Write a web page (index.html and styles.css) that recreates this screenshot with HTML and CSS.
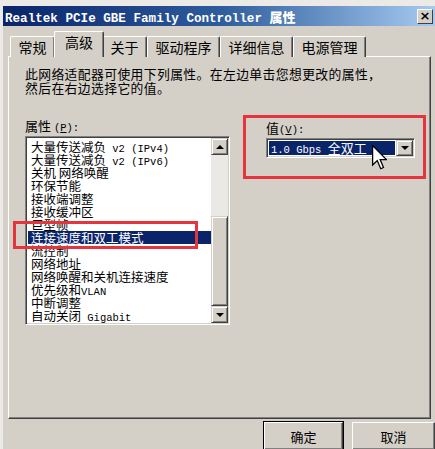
FILE: index.html
```html
<!DOCTYPE html>
<html lang="zh-CN">
<head>
    <meta charset="utf-8">
    <title>Realtek PCIe GBE Family Controller 属性</title>
    <link rel="stylesheet" href="styles.css">
</head>
<body>
    <div class="window">
        <div class="titlebar">
            <span class="title">Realtek PCIe GBE Family Controller <b class="cjk">属性</b></span>
            <span class="close">&times;</span>
        </div>
        <div class="tabs">
            <div class="tab">常规</div>
            <div class="tab active">高级</div>
            <div class="tab">关于</div>
            <div class="tab">驱动程序</div>
            <div class="tab">详细信息</div>
            <div class="tab">电源管理</div>
        </div>
        <div class="panel">
            <p class="desc">此网络适配器可使用下列属性。在左边单击您想更改的属性，<br>然后在右边选择它的值。</p>
            <div class="props">
                <div class="col">
                    <div class="label">属性 <span class="en">(<u>P</u>):</span></div>
                    <div class="listbox">
                        <ul class="items">
                            <li>大量传送减负<span class="en"> v2 (IPv4)</span></li>
                            <li>大量传送减负<span class="en"> v2 (IPv6)</span></li>
                            <li>关机 网络唤醒</li>
                            <li>环保节能</li>
                            <li>接收端调整</li>
                            <li>接收缓冲区</li>
                            <li>巨型帧</li>
                            <li class="selected">连接速度和双工模式</li>
                            <li>流控制</li>
                            <li>网络地址</li>
                            <li>网络唤醒和关机连接速度</li>
                            <li>优先级和<span class="en">VLAN</span></li>
                            <li>中断调整</li>
                            <li>自动关闭<span class="en"> Gigabit</span></li>
                        </ul>
                        <div class="scrollbar">
                            <div class="sb-btn"><span class="arrow up"></span></div>
                            <div class="sb-track"><div class="sb-thumb"></div></div>
                            <div class="sb-btn"><span class="arrow down"></span></div>
                        </div>
                    </div>
                </div>
                <div class="col">
                    <div class="label">值<span class="en">(<u>V</u>):</span></div>
                    <div class="combo">
                        <span class="combo-value"><span class="en">1.0 Gbps </span>全双工</span>
                        <span class="combo-btn"><span class="arrow down"></span></span>
                    </div>
                </div>
            </div>

            <!-- red annotation boxes and mouse pointer on top of the dialog -->
            <div class="mark mark-list"></div>
            <div class="mark mark-value"></div>
            <svg class="cursor" viewBox="0 0 12 20" width="15" height="25">
                <path d="M0.5 0.5 L0.5 16 L4.2 12.4 L7 19 L9.2 18 L6.5 11.6 L11.5 11.6 Z" fill="#fff" stroke="#000" stroke-width="1"/>
            </svg>
        </div>
        <div class="buttons">
            <button class="btn default">确定</button>
            <button class="btn cancel">取消</button>
        </div>
    </div>
</body>
</html>
```
FILE: styles.css
```css
body {
    margin: 0;
    background: #eceae6;
    font-family: "Noto Sans CJK SC", "DejaVu Sans", sans-serif;
    font-size: 13px;
    color: #000;
    overflow: hidden;
}
.window {
    width: 432px;
    height: 443px;
    margin: 6px 0 0 3px;
    background: #d4d0c8;
}
.en {
    font-family: "Liberation Mono", monospace;
    font-size: 10.5px;
}
.titlebar {
    height: 20px;
    display: flex;
    align-items: center;
    justify-content: space-between;
    padding: 0 2px 0 2px;
    background: linear-gradient(to right, #0a246a, #2d5c9c 50%, #a6caf0);
    color: #fff;
}
.title {
    font-family: "Liberation Mono", monospace;
    font-weight: bold;
    font-size: 12.6px;
    white-space: nowrap;
}
.title .cjk {
    font-family: "Noto Sans CJK SC", sans-serif;
    font-size: 13px;
}
.close {
    width: 14px;
    height: 13px;
    background: #d4d0c8;
    border: 1px solid;
    border-color: #fff #404040 #404040 #fff;
    color: #000;
    font-family: "DejaVu Sans", sans-serif;
    font-weight: bold;
    font-size: 13px;
    line-height: 12px;
    text-align: center;
}
.tabs {
    display: flex;
    align-items: flex-end;
    height: 25px;
    margin: 5px 0 0 7px;
    position: relative;
    z-index: 1;
}
.tab {
    height: 20px;
    padding: 0 7.5px;
    margin-bottom: -1px;
    border: 1px solid;
    border-color: #fff #404040 transparent #fff;
    border-bottom: none;
    border-radius: 2px 2px 0 0;
    box-shadow: inset -1px 0 #808080;
    background: #d4d0c8;
    font-size: 14px;
    line-height: 20px;
}
.tab.active {
    height: 25px;
    margin: 0 -2px -1px -1px;
    padding: 0 10px;
    position: relative;
    line-height: 20px;
}
.tab.active + .tab {
    border-left: 1px solid #d4d0c8;
}
.panel {
    position: relative;
    box-sizing: border-box;
    width: 423px;
    height: 363px;
    margin-left: 5px;
    border: 1px solid;
    border-color: #fff #404040 #404040 #fff;
    box-shadow: inset -1px -1px #808080;
}
.desc {
    margin: 0;
    padding: 10px 0 0 16px;
    font-size: 12.8px;
    line-height: 14px;
    letter-spacing: 0.4px;
}
.props {
    display: grid;
    grid-template-columns: 205px 149px;
    column-gap: 36px;
    margin: 23px 0 0 16px;
}
.label {
    height: 16px;
    margin-bottom: 2px;
    line-height: 16px;
    font-size: 13px;
}
.col:last-child .label {
    margin-top: 2px;
    margin-bottom: 0;
}
.listbox {
    display: flex;
    height: 189px;
    box-sizing: border-box;
    border: 1px solid;
    border-color: #808080 #fff #fff #808080;
    box-shadow: inset 1px 1px #404040, inset -1px -1px #d4d0c8;
    background: #fff;
    padding: 2px 1px 1px 2px;
}
.items {
    flex: 1;
    list-style: none;
    margin: 0;
    padding: 1px 0 0;
}
.items li {
    height: 13px;
    padding-left: 3px;
    font-size: 12.5px;
    line-height: 13px;
    white-space: nowrap;
}
.items li.selected {
    background: #0a246a;
    color: #fff;
}
.scrollbar {
    width: 17px;
    margin-top: -1px;
    display: flex;
    flex-direction: column;
    background: #ebe9e5;
}
.sb-btn,
.sb-thumb,
.combo-btn {
    box-sizing: border-box;
    background: #d4d0c8;
    border: 1px solid;
    border-color: #d4d0c8 #404040 #404040 #d4d0c8;
    box-shadow: inset 1px 1px #fff, inset -1px -1px #808080;
    display: flex;
    align-items: center;
    justify-content: center;
}
.sb-btn {
    height: 17px;
}
.sb-track {
    flex: 1;
    display: flex;
    flex-direction: column;
    justify-content: flex-end;
}
.sb-thumb {
    height: 90px;
}
.arrow {
    width: 0;
    height: 0;
    border-left: 4px solid transparent;
    border-right: 4px solid transparent;
}
.arrow.up {
    border-bottom: 4px solid #000;
}
.arrow.down {
    border-top: 4px solid #000;
}
.combo {
    display: flex;
    height: 20px;
    margin-top: 2px;
    box-sizing: border-box;
    border: 1px solid;
    border-color: #808080 #fff #fff #808080;
    box-shadow: inset 1px 1px #404040, inset -1px -1px #d4d0c8;
    background: #fff;
    padding: 2px;
}
.combo-value {
    flex: 1;
    margin-right: 1px;
    padding-left: 2px;
    background: #0a246a;
    color: #fff;
    font-size: 13px;
    line-height: 14px;
    white-space: nowrap;
}
.combo-btn {
    width: 17px;
    margin: -1px -1px -1px 0;
}
.mark {
    position: absolute;
    box-sizing: border-box;
    border: 3px solid #e5343c;
}
.mark-list {
    left: 4px;
    top: 164px;
    width: 185px;
    height: 28px;
}
.mark-value {
    left: 234px;
    top: 58px;
    width: 183px;
    height: 64px;
}
.cursor {
    position: absolute;
    left: 363px;
    top: 88px;
}
.buttons {
    display: flex;
    justify-content: flex-end;
    gap: 9px;
    margin-top: 3px;
}
.btn {
    box-sizing: border-box;
    height: 28px;
    background: #d4d0c8;
    border: 1px solid;
    border-color: #fff #404040 #404040 #fff;
    box-shadow: inset -1px -1px #808080;
    font-family: "Noto Sans CJK SC", sans-serif;
    font-size: 13px;
    padding: 0;
}
.btn.default {
    width: 79px;
    outline: 1px solid #000;
}
.btn.cancel {
    width: 83px;
}
```
